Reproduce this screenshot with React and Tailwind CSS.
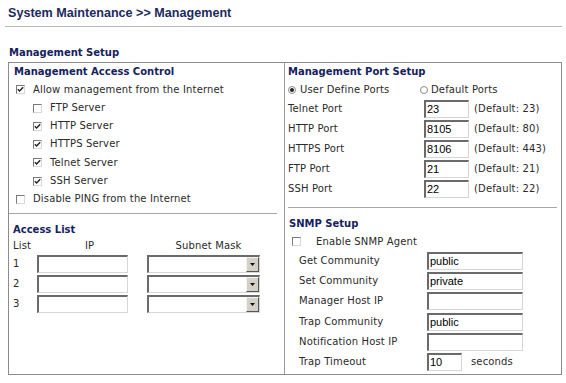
import React from "react";

const FONT = { fontFamily: '"DejaVu Sans", Verdana, sans-serif', letterSpacing: "0.15px" };

const Check = ({ checked }) => (
    <span className="inline-flex w-[9px] h-[9px] shrink-0 bg-white border border-t-[#7a7a7a] border-l-[#7a7a7a] border-r-[#d8d8d8] border-b-[#d8d8d8] items-center justify-center">
        {checked && (
            <svg width="7" height="7" viewBox="0 0 7 7">
                <path d="M0.8 3.2 L2.6 5 L6.2 1.2" fill="none" stroke="#222" strokeWidth="1.4" />
            </svg>
        )}
    </span>
);

const Radio = ({ checked }) => (
    <span className="inline-flex w-[8px] h-[8px] shrink-0 rounded-full bg-white border border-[#8a8a8a] items-center justify-center">
        {checked && <span className="w-[4px] h-[4px] rounded-full bg-[#222]" />}
    </span>
);

const Field = ({ value, w }) => (
    <div
        className={`${w} h-[18px] bg-white border border-t-[#6a6a6a] border-l-[#6a6a6a] border-r-[#d6d6d6] border-b-[#d6d6d6] border-t-2 border-l-2 flex items-center pl-[1px] text-[11px] text-black`}
        style={{ fontFamily: '"Liberation Sans", Arial, sans-serif', letterSpacing: 0 }}
    >
        {value}
    </div>
);

const Select = () => (
    <div className="w-[113px] h-[18px] bg-white border-t-2 border-l-2 border-r border-b border-t-[#6a6a6a] border-l-[#6a6a6a] border-r-[#d6d6d6] border-b-[#d6d6d6] flex justify-end">
        <div className="w-[13px] h-full bg-[#d4d0c8] border border-t-[#f4f4f4] border-l-[#f4f4f4] border-r-[#555] border-b-[#555] flex items-center justify-center">
            <svg width="5" height="3" viewBox="0 0 5 3">
                <path d="M0 0 H5 L2.5 3 Z" fill="#111" />
            </svg>
        </div>
    </div>
);

const Head = ({ children, className = "" }) => (
    <div className={`font-bold text-[10px] text-[#15225e] tracking-normal flex items-center ${className}`}>{children}</div>
);

const CheckRow = ({ checked, label, h, indent }) => (
    <div className={`flex items-center ${h} ${indent}`}>
        <Check checked={checked} />
        <span className="ml-[8px]">{label}</span>
    </div>
);

const PortRow = ({ label, value, def }) => (
    <div className="flex items-center h-[20px]">
        <span className="w-[136px]">{label}</span>
        <Field value={value} w="w-[45px]" />
        <span className="ml-[5px]">{def}</span>
    </div>
);

const SnmpRow = ({ label, value, h = "h-[20px]", timeout }) => (
    <div className={`flex items-center ${h} pl-[11px]`}>
        <span className="w-[128px]">{label}</span>
        {timeout ? (
            <>
                <Field value={value} w="w-[35px]" />
                <span className="ml-[9px]">seconds</span>
            </>
        ) : (
            <Field value={value} w="w-[96px]" />
        )}
    </div>
);

export default function App() {
    return (
        <div className="w-[566px] h-[383px] bg-white text-[10px] text-[#2a2a2a] leading-none" style={FONT}>
            <div
                className="h-[26px] flex items-center pl-[8px] font-bold text-[12.6px] text-[#1c2b5c]"
                style={{ fontFamily: '"Liberation Sans", Arial, sans-serif', letterSpacing: 0 }}
            >
                System Maintenance &gt;&gt; Management
            </div>
            <div className="ml-[5px] w-[557px] h-px bg-[#b8b8b8]" />
            <div className="h-[35px] flex items-end pl-[9px] pb-[1px]">
                <Head className="h-[16px]">Management Setup</Head>
            </div>
            <div className="ml-[8px] w-[554px] h-[313px] border border-[#8c8c8c] flex">
                {/* left column */}
                <div className="w-[276px] border-r border-[#9a9a9a]">
                    <Head className="h-[17px] pl-[5px]">Management Access Control</Head>
                    <CheckRow checked label="Allow management from the Internet" h="h-[19px]" indent="pl-[7px]" />
                    <CheckRow label="FTP Server" h="h-[18px]" indent="pl-[24px]" />
                    <CheckRow checked label="HTTP Server" h="h-[18px]" indent="pl-[24px]" />
                    <CheckRow checked label="HTTPS Server" h="h-[18px]" indent="pl-[24px]" />
                    <CheckRow checked label="Telnet Server" h="h-[19px]" indent="pl-[24px]" />
                    <CheckRow checked label="SSH Server" h="h-[18px]" indent="pl-[24px]" />
                    <CheckRow label="Disable PING from the Internet" h="h-[18px]" indent="pl-[7px]" />
                    <div className="mt-[5px] mr-[7px] h-px bg-[#a8a8a8]" />
                    <div className="h-[24px] flex items-end pl-[4px]">
                        <Head className="h-[16px]">Access List</Head>
                    </div>
                    <div className="h-[16px] flex items-center pl-[4px]">
                        <span className="w-[24px]">List</span>
                        <span className="w-[91px] pl-[48px]">IP</span>
                        <span className="ml-[19px] w-[113px] text-center pl-[10px]">Subnet Mask</span>
                    </div>
                    {[1, 2, 3].map(n => (
                        <div key={n} className="h-[20px] flex items-center pl-[4px]">
                            <span className="w-[24px]">{n}</span>
                            <Field value="" w="w-[91px]" />
                            <div className="ml-[19px]">
                                <Select />
                            </div>
                        </div>
                    ))}
                </div>
                {/* right column */}
                <div className="flex-1 pl-[3px]">
                    <Head className="h-[17px]">Management Port Setup</Head>
                    <div className="h-[19px] flex items-center">
                        <Radio checked />
                        <span className="ml-[4px] w-[120px]">User Define Ports</span>
                        <Radio />
                        <span className="ml-[3px]">Default Ports</span>
                    </div>
                    <PortRow label="Telnet Port" value="23" def="(Default: 23)" />
                    <PortRow label="HTTP Port" value="8105" def="(Default: 80)" />
                    <PortRow label="HTTPS Port" value="8106" def="(Default: 443)" />
                    <PortRow label="FTP Port" value="21" def="(Default: 21)" />
                    <PortRow label="SSH Port" value="22" def="(Default: 22)" />
                    <div className="mt-[8px] mr-[4px] h-px bg-[#a8a8a8]" />
                    <div className="h-[24px] flex items-end pl-[1px]">
                        <Head className="h-[16px]">SNMP Setup</Head>
                    </div>
                    <div className="h-[19px] flex items-center pl-[4px]">
                        <Check />
                        <span className="ml-[15px]">Enable SNMP Agent</span>
                    </div>
                    <SnmpRow label="Get Community" value="public" />
                    <SnmpRow label="Set Community" value="private" />
                    <SnmpRow label="Manager Host IP" value="" />
                    <SnmpRow label="Trap Community" value="public" h="h-[21px]" />
                    <SnmpRow label="Notification Host IP" value="" />
                    <SnmpRow label="Trap Timeout" value="10" h="h-[20px]" timeout />
                </div>
            </div>
        </div>
    );
}
